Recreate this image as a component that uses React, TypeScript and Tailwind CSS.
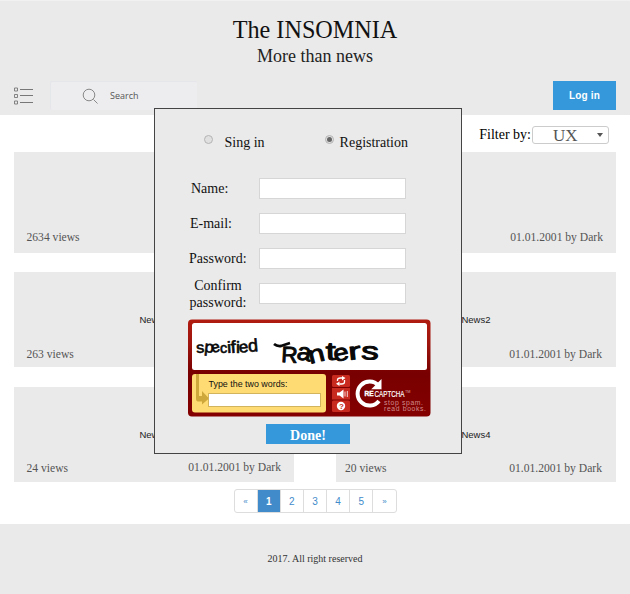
import React from "react";

const serif = "font-['Liberation_Serif','Times_New_Roman',serif]";
const sans = "font-['Liberation_Sans',Arial,sans-serif]";

type CardProps = { title?: string; views?: string; author?: string; height: string; foot: string; authorFoot?: string };

function NewsCard({ title, views, author, height, foot, authorFoot }: CardProps) {
  return (
    <article className={`relative w-[280px] bg-[#eaeaea] ${height}`}>
      {title && (
        <h2 className={`flex h-full items-center justify-center pt-px text-[9.5px] text-[#222] ${sans}`}>{title}</h2>
      )}
      <span className={`absolute text-[11.6px] leading-[14px] text-[#555] ${title === "News4" ? "left-[9px]" : "left-[12.5px]"} ${foot}`}>{views}</span>
      <span className={`absolute text-[11.6px] leading-[14px] text-[#555] ${title === "News2" || title === "News4" ? "right-[14px]" : "right-[13px]"} ${authorFoot ?? foot}`}>{author}</span>
    </article>
  );
}

function Radio({ label, checked }: { label: string; checked?: boolean }) {
  return (
    <label className="flex items-start">
      <span className="mt-px flex h-[9px] w-[9px] items-center justify-center rounded-full border border-[#b4b4b4] bg-[#e0e0e0]">
        {checked && <span className="h-[5px] w-[5px] rounded-full bg-[#666]" />}
      </span>
      <span className={`pt-[1px] text-[14px] leading-[16px] ${checked ? "ml-[6px]" : "ml-[11.500px]"}`}>{label}</span>
    </label>
  );
}

function Field({ label, pad }: { label: React.ReactNode; pad: string }) {
  return (
    <div className="flex h-[35px] items-center">
      <div className={`w-[70px] text-[14px] leading-[17px] ${pad}`}>{label}</div>
      <input className="h-[21px] w-[147px] border border-[#d6d6d6] bg-white outline-none" />
    </div>
  );
}

/* letter, x, baseline, rotation, size, horizontal stretch */
type Glyph = [string, number, number, number, number, number];
const firstWord: Glyph[] = [
  ["s", 8.5, 34, -4, 17, 0.95], ["p", 16, 33, 6, 18, 0.95], ["e", 24.5, 34, -14, 17, 0.9], ["c", 32, 34, 0, 17, 0.85],
  ["i", 39.5, 34, -4, 18, 1], ["f", 43, 34, -4, 19, 1], ["i", 48, 34, 0, 18, 1], ["e", 51.5, 34, -8, 18, 0.95],
  ["d", 60.5, 33, -5, 20, 0.9],
];
const secondWord: Glyph[] = [
  ["R", 93, 43, 3, 25, 0.9], ["a", 108, 40, 10, 27, 0.95], ["n", 122, 45, -14, 27, 1.1], ["t", 138, 41, -2, 28, 1.3],
  ["e", 147, 43, -12, 26, 1.05], ["r", 161, 41, -6, 27, 1.4], ["s", 173, 40, 2, 27, 1.3],
];

function Word({ glyphs, weight }: { glyphs: Glyph[]; weight: number }) {
  return (
    <g fill="#080808" stroke="#080808" strokeWidth={weight} strokeLinejoin="round" fontFamily="Liberation Sans">
      {glyphs.map(([c, x, y, r, size, stretch], i) => (
        <text key={i} fontSize={size} transform={`translate(${x} ${y}) rotate(${r}) scale(${stretch} .9)`}>{c}</text>
      ))}
    </g>
  );
}

function Captcha() {
  return (
    <svg className="block" width="243" height="98" viewBox="0 0 243 98">
      <defs>
        <linearGradient id="frame" x1="0" y1="0" x2="0" y2="1">
          <stop offset="0" stopColor="#b01c10" />
          <stop offset=".25" stopColor="#9e150e" />
          <stop offset=".55" stopColor="#780000" />
          <stop offset="1" stopColor="#840000" />
        </linearGradient>
      </defs>
      <rect y=".5" width="242.500" height="97" rx="4" fill="url(#frame)" />
      <rect x="4" y="4" width="235" height="47" rx="2.5" fill="#fff" />
      <Word glyphs={firstWord} weight={0.7} />
      <path d="M86 25q3 2.500 7 2l9-3" stroke="#080808" strokeWidth="2.800" fill="none" />
      <Word glyphs={secondWord} weight={1.1} />
      <rect x="4" y="55" width="134" height="38.500" rx="3" fill="#ffdc73" />
      <path d="M8 55h3v22h3v-5l7 7.500-7 6v-3H10q-2 0-2-3z" fill="#cfa83b" />
      <text x="20.500" y="67.500" fontSize="8.8" fill="#111" fontFamily="Liberation Sans" textLength="79" lengthAdjust="spacingAndGlyphs">Type the two words:</text>
      <rect x="20.500" y="74.500" width="112" height="13" fill="#fff" stroke="#d2b45c" />
      <g fill="#c92a20">
        <rect x="144" y="56" width="18" height="12" rx="1.500" />
        <rect x="144" y="69" width="18" height="11.500" />
        <rect x="144" y="81.500" width="18" height="11.500" rx="1.500" />
      </g>
      <g fill="none" stroke="#fff" strokeWidth="1.300">
        <path d="M149.500 62v-1q0-2 3-2h2M156.500 61v2q0 2-3 2h-2" />
        <path d="M157 72.500v5M159.300 72v6" strokeWidth=".8" />
      </g>
      <path d="M154 57l3.500 2-3.500 2.500zM151.500 62.500l-3.500 2.300 3.500 2.200zM149 73.500h2.500l4-3v9l-4-3H149z" fill="#fff" />
      <circle cx="153" cy="87" r="4.200" fill="#fff" />
      <text x="150.900" y="90" fontSize="8" fontWeight="bold" fill="#c92a20" fontFamily="Liberation Sans">?</text>
      <path d="M190.500 66.500A12 12 0 1 0 191 82" fill="none" stroke="#fff" strokeWidth="4" />
      <path d="M193.500 60v10.500H183z" fill="#fff" />
      <rect x="175.500" y="70.500" width="18" height="8" fill="#7b0000" />
      <text x="176.500" y="76.500" fontSize="6.500" fontWeight="bold" fill="#fff" stroke="#fff" strokeWidth=".4" fontFamily="Liberation Sans" textLength="9" lengthAdjust="spacingAndGlyphs">RE</text>
      <text x="186.500" y="77.500" fontSize="9.500" fill="#fff" stroke="#fff" strokeWidth=".2" fontFamily="Liberation Sans" textLength="30" lengthAdjust="spacingAndGlyphs">CAPTCHA</text>
      <text x="217" y="73.500" fontSize="3.800" fill="#dda5a5" fontFamily="Liberation Sans">TM</text>
      <g fill="#d08c8c" fontSize="6.800" fontFamily="Liberation Sans">
        <text x="196" y="85.500" textLength="39">stop spam.</text>
        <text x="196" y="92" textLength="42">read books.</text>
      </g>
    </svg>
  );
}

function RegistrationDialog() {
  return (
    <section className="absolute left-[154px] top-[108px] h-[346px] w-[308px] border border-[#444] bg-[#eaeaea] text-[#111]">
      <div className="flex gap-[60px] pl-[49px] pt-[25px]">
        <Radio label="Sing in" />
        <Radio label="Registration" checked />
      </div>
      <form className="ml-[34px] mt-[20px]">
        <Field label="Name:" pad="pl-[2px]" />
        <Field label="E-mail:" pad="pl-px" />
        <Field label="Password:" pad="pl-0" />
        <Field label={<>Confirm<br />password:</>} pad="pr-[12px] text-center" />
      </form>
      <div className="ml-[33px] mt-[8px]"><Captcha /></div>
      <button className="ml-[111px] mt-[7px] block h-[20px] w-[84px] bg-[#3498db] text-center text-[14px] font-bold leading-[23px] text-white">Done!</button>
    </section>
  );
}

export default function App() {
  return (
    <div className={`relative h-[594px] w-[630px] overflow-hidden bg-white text-black ${serif}`}>
      <header className="h-[115px] border-t border-[#f1f1f1] bg-[#eaeaea]">
        <h1 className="pt-[15px] text-center text-[24.2px] leading-[28px] text-[#111]">The INSOMNIA</h1>
        <p className="h-[37px] text-center text-[18px] leading-[24px] text-[#222]">More than news</p>
        <div className="flex pl-[14px] pr-[14px]">
          <svg className="mt-[5px]" width="20" height="19" fill="none" stroke="#777">
            <path d="M6 3.500h13M6 9.500h13M6 16.500h13" />
            <path d="M.5 2h3v3h-3zM.5 8.500h3v3h-3zM.5 15h3v3h-3z" strokeWidth=".9" />
          </svg>
          <div className="ml-[16px] flex h-[29px] w-[147px] items-center rounded-[2px] border-l border-t border-[#e4e6ea] bg-[#ededef] pl-[31px]">
            <svg width="17" height="17" fill="none" stroke="#888">
              <circle cx="7" cy="7" r="5.800" /><path d="M11.500 11.500l4 4" />
            </svg>
            <span className="ml-[11px] font-['Open_Sans',sans-serif] text-[9px] text-[#555]">Search</span>
          </div>
          <button className={`ml-auto h-[29px] w-[63px] bg-[#3498db] text-[10px] font-bold tracking-[0.15px] text-white ${sans}`}>Log in</button>
        </div>
      </header>
      <div className="flex h-[37px] justify-end pr-[21px] pt-[11px]">
        <span className="text-[14px] leading-[17px]">Filter by:</span>
        <div className="ml-px flex h-[18px] w-[77px] items-center rounded-[3px] border border-[#ccc] bg-white pl-[20px] text-[17px] leading-[18px] text-[#555]">
          <span className="pt-[2px]">UX</span>
          <span className="ml-auto mr-[5px] h-0 w-0 border-x-[3px] border-t-[4px] border-x-transparent border-t-[#555]" />
        </div>
      </div>
      <main className="grid grid-cols-[280px_280px] justify-between px-[14px]">
        <NewsCard height="h-[101px] mb-[19px]" views="2634 views" foot="top-[79px]" />
        <NewsCard height="h-[101px] mb-[19px]" author="01.01.2001 by Dark" foot="top-[79px]" />
        <NewsCard height="h-[95px] mb-[20px]" title="News1" views="263 views" foot="top-[76px]" />
        <NewsCard height="h-[95px] mb-[20px]" title="News2" author="01.01.2001 by Dark" foot="top-[76px]" />
        <NewsCard height="h-[95px]" title="News3" views="24 views" author="01.01.2001 by Dark" foot="top-[75px]" authorFoot="top-[74px]" />
        <NewsCard height="h-[95px]" title="News4" views="20 views" author="01.01.2001 by Dark" foot="top-[75px]" />
      </main>
      <nav className={`mx-auto mt-[7px] flex h-[24px] w-[163px] divide-x divide-[#ddd] overflow-hidden rounded-[3px] border border-[#ddd] text-[10px] text-[#428bca] ${sans}`}>
        {["«", "1", "2", "3", "4", "5", "»"].map((page) => (
          <a key={page} className={`flex flex-1 items-center justify-center pt-px ${page === "1" ? "bg-[#428bca] font-bold text-white" : ""} ${page === "«" || page === "»" ? "text-[8px]" : ""}`}>{page}</a>
        ))}
      </nav>
      <footer className="mt-[11px] h-[70px] bg-[#eaeaea] text-center text-[10px] leading-[70px] text-[#333]">2017. All right reserved</footer>
      <RegistrationDialog />
    </div>
  );
}
